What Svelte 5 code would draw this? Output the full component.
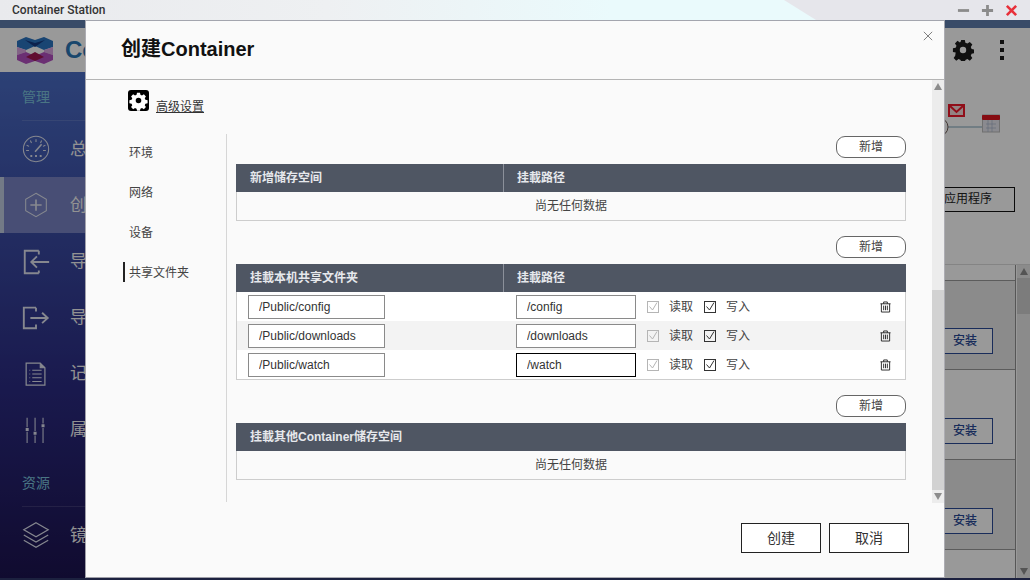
<script>
  const navItems = [
    { label: '总览', icon: 'gauge' },
    { label: '创建', icon: 'plus', active: true },
    { label: '导入', icon: 'import' },
    { label: '导出', icon: 'export' },
    { label: '记录', icon: 'doc' },
    { label: '属性', icon: 'sliders' },
  ];
  const tabs = ['环境', '网络', '设备', '共享文件夹'];
  const shares = [
    { host: '/Public/config', path: '/config' },
    { host: '/Public/downloads', path: '/downloads' },
    { host: '/Public/watch', path: '/watch', focus: true },
  ];
</script>

{#snippet navIcon(name)}
  <svg class="nav-icon" viewBox="0 0 32 32" fill="none" stroke="currentColor" stroke-width="1.1">
    {#if name === 'gauge'}
      <circle cx="16" cy="16" r="13.5" />
      <path d="M15 19l7-8" stroke-width="1.6" />
      <path d="M16 5.500v3M10 7l1.200 2.600M22 7l-1.200 2.600M6 12l2.600 1.200M26 12l-2.600 1.200M5.500 17.500h3M23.500 17.500h3" />
      <path d="M10 23.500h2M15 23.500h2M20 23.500h2" stroke-width="2" />
    {:else if name === 'plus'}
      <path d="M16 3.500l11 6.300v12.400l-11 6.300-11-6.300V9.800z" />
      <path d="M16 10v12M10 16h12" stroke-width="1.800" />
    {:else if name === 'import'}
      <path d="M19 5H4v24h15M19 5v4M19 29v-3" stroke-width="2" />
      <path d="M30 17H11M17 11l-6 6 6 6" stroke-width="2" />
    {:else if name === 'export'}
      <path d="M16 6H3v22h13v-4M16 6v4" stroke-width="2" />
      <path d="M10 17h18M22.500 11.500l6 5.500-6 5.500" stroke-width="2" />
    {:else if name === 'doc'}
      <path d="M5.500 5.500h15l5 5v18.500h-20z" stroke-width="1.300" />
      <path d="M20.500 5.500v5h5" fill="currentColor" />
      <path d="M9 13h.8M9 17h.8M9 21h.8M9 25h.8M12 13h10M12 17h10M12 21h10M12 25h10" />
    {:else if name === 'sliders'}
      <path d="M6.500 4v10M6.500 19v12M15 4v14M15 23v8M23.500 4v6M23.500 15v16" />
      <path d="M5 15h3.200v3.200H5zM13.400 19h3.200v3.200h-3.200zM21.900 11h3.200v3.200h-3.200z" fill="currentColor" stroke="none" />
    {/if}
  </svg>
{/snippet}

{#snippet check(muted)}
  <svg class="check" class:muted viewBox="0 0 12 12" fill="none" stroke="currentColor">
    <rect x=".5" y=".5" width="11" height="11" />
    <path d="M2.500 5.500l3 3.500 4.500-7.500" />
  </svg>
{/snippet}

{#snippet addButton()}
  <div class="add-row"><button type="button" class="add">新增</button></div>
{/snippet}

<div class="window">
  <header class="titlebar">
    <div class="swoosh"></div>
    <span class="app-name">Container Station</span>
    <div class="win-controls">
      <svg viewBox="0 0 14 14" class="win"><path d="M1 7h12" stroke="#8b8b8b" stroke-width="3" /></svg>
      <svg viewBox="0 0 14 14" class="win"><path d="M1 7h12M7 1v12" stroke="#8b8b8b" stroke-width="3" /></svg>
      <svg viewBox="0 0 14 14" class="win"><path d="M2 2l10 10M12 2L2 12" stroke="#e8303a" stroke-width="2.800" /></svg>
    </div>
  </header>

  <div class="app">
    <div class="strip"></div>
    <div class="appbar">
      <div class="brand">
        <svg viewBox="0 0 36 27" class="logo">
          <polygon points="0,4 9,0 18,3 27,0 36,4 36,10 27,13 18,9 9,13 0,10" fill="#2a73c0" />
          <polygon points="8,3 18,6 28,3 18,10" fill="#163a80" />
          <polygon points="0,10 9,13 9,15 0,18" fill="#d9a6e0" />
          <polygon points="36,10 27,13 27,15 36,18" fill="#d9a6e0" />
          <polygon points="0,18 9,15 18,19 27,15 36,18 36,23 27,27 18,24 9,27 0,23" fill="#b24fc0" />
          <polygon points="9,20 18,15 27,20 18,24" fill="#a01750" />
        </svg>
        <span class="brand-name">Co</span>
      </div>
      <div class="bar-actions">
        <svg viewBox="0 0 24 24" class="gear"><path d="M12 8.500a3.500 3.500 0 100 7 3.500 3.500 0 000-7zM10 1h4l.6 3 2.200.9 2.600-1.700 2.800 2.800-1.700 2.600.9 2.200 3 .6v4l-3 .6-.9 2.200 1.700 2.600-2.800 2.800-2.600-1.700-2.200.9-.6 3h-4l-.6-3-2.200-.9-2.600 1.700-2.800-2.800 1.700-2.600L4 14.800l-3-.6v-4l3-.6.900-2.200L3.200 4.800 6 2l2.600 1.700 .8-.7z" fill="#1c1c1c" fill-rule="evenodd" /></svg>
        <div class="dots"><i></i><i></i><i></i></div>
      </div>
    </div>

    <div class="under">
      <aside class="sidebar">
        <div class="side-title">管理</div>
        {#each navItems as item}
          <div class="nav-item" class:active={item.active}>
            {@render navIcon(item.icon)}
            <span>{item.label}</span>
          </div>
        {/each}
        <div class="side-title">资源</div>
        <div class="nav-item">
          <svg class="nav-icon" viewBox="0 0 32 32" fill="none" stroke="currentColor" stroke-width="1.300">
            <path d="M16 3l13 7.500-13 7.500-13-7.500z" />
            <path d="M3 16l13 7.500L29 16M3 21.500L16 29l13-7.500" />
          </svg>
          <span>镜像</span>
        </div>
      </aside>

      <main class="content">
        <div class="flow">
          <svg viewBox="0 0 66 36" class="flow-art" fill="none">
            <path d="M8 27h34" stroke="#7aa2b8" />
            <circle cx="-1" cy="27" r="9" stroke="#6d5a55" />
            <path d="M9 5h15v11H9z" fill="#f7dada" stroke="#f0182a" stroke-width="2" />
            <path d="M10 6l6.500 6L23 6" stroke="#f0182a" stroke-width="2" />
            <rect x="42.500" y="15" width="17" height="17" fill="#e6e6ee" stroke="#bbb" />
            <rect x="42" y="15" width="18" height="5" rx="1" fill="#e0141f" />
            <path d="M46 24h10M46 28h10M48 20v12M52 20v12" stroke="#a8b4cc" stroke-width=".7" />
          </svg>
        </div>
        <div class="toolbar"><div class="apps-btn">应用程序</div></div>
        <div class="apps">
          <div class="app-list">
            {#each [0, 1, 2, 3] as row}
              <div class="app-row" class:alt={row % 2 === 1}>
                {#if row < 3}<div class="install">安装</div>{/if}
              </div>
            {/each}
          </div>
          <div class="page-scroll">
            <i class="up"></i>
            <div class="page-thumb"></div>
            <i class="down"></i>
          </div>
        </div>
      </main>
    </div>
    <div class="bottom-line"></div>

    <div class="backdrop"></div>

    <div class="modal" role="dialog" aria-modal="true">
      <div class="modal-head">
        <h2>创建Container</h2>
        <svg class="close" viewBox="0 0 12 12"><path d="M1 1l10 10M11 1L1 11" stroke="#666" /></svg>
      </div>
      <div class="modal-body">
        <div class="scroll-area">
          <div class="advanced">
            <span class="adv-icon">
              <svg viewBox="0 0 24 24"><path d="M12 8.800a3.200 3.200 0 100 6.400 3.200 3.200 0 000-6.400zM10.300 3h3.400l.5 2.500 1.800.8 2.100-1.400 2.400 2.400-1.400 2.100.8 1.800 2.500.5v3.400l-2.500.5-.8 1.800 1.400 2.100-2.400 2.400-2.100-1.400-1.800.8-.5 2.500h-3.400l-.5-2.500-1.800-.8-2.100 1.400-2.400-2.400 1.400-2.100-.8-1.800-2.500-.5v-3.400l2.500-.5.800-1.800-1.400-2.100 2.400-2.400 2.100 1.400 1.800-.8z" fill="#fff" fill-rule="evenodd" /></svg>
            </span>
            <span class="adv-label">高级设置</span>
          </div>
          <div class="columns">
            <nav class="tabs">
              {#each tabs as tab, i}
                <div class="tab" class:current={i === tabs.length - 1}>{tab}</div>
              {/each}
            </nav>
            <section class="panel">
              {@render addButton()}
              <div class="table">
                <div class="thead"><span class="col-a">新增储存空间</span><span class="col-b">挂載路径</span></div>
                <div class="empty">尚无任何数据</div>
              </div>

              {@render addButton()}
              <div class="table">
                <div class="thead"><span class="col-a">挂載本机共享文件夹</span><span class="col-b">挂載路径</span></div>
                {#each shares as share}
                  <div class="share-row">
                    <input class="host" value={share.host} />
                    <input class="path" class:focus={share.focus} value={share.path} />
                    {@render check(true)}
                    <span class="perm">读取</span>
                    {@render check(false)}
                    <span class="perm">写入</span>
                    <svg class="trash" viewBox="0 0 12 12" fill="none" stroke="#222">
                      <path d="M.5 2.500h11M4 2.500V.5h4v2M1.500 2.500v9h9v-9M4 4.500v5M6 4.500v5M8 4.500v5" />
                    </svg>
                  </div>
                {/each}
              </div>

              {@render addButton()}
              <div class="table">
                <div class="thead"><span class="col-a solo">挂載其他Container储存空间</span></div>
                <div class="empty">尚无任何数据</div>
              </div>
            </section>
          </div>
        </div>
        <div class="scrollbar">
          <i class="up"></i>
          <div class="track"><div class="thumb"></div></div>
          <i class="down"></i>
        </div>
      </div>
      <div class="modal-foot">
        <button type="button" class="action">创建</button>
        <button type="button" class="action">取消</button>
      </div>
    </div>
  </div>
</div>

<style>
  :global(body) {
    margin: 0;
    background: #1a1238;
  }

  .window {
    width: 1030px;
    height: 580px;
    display: flex;
    flex-direction: column;
    overflow: hidden;
    font-family: "Liberation Sans", "Noto Sans CJK SC", sans-serif;
  }

  .titlebar {
    position: relative;
    height: 20px;
    flex: none;
    display: flex;
    align-items: center;
    justify-content: space-between;
    padding: 0 12px;
    background: #e6e6eb;
    overflow: hidden;
  }

  .app-name {
    position: relative;
    font: 500 12px Roboto, sans-serif;
    color: #333;
  }

  .swoosh {
    position: absolute;
    left: 0;
    top: 0;
    width: 816px;
    height: 20px;
    background: linear-gradient(90deg, #e9eaed, #eef0f2 40%, #eafafc 75%);
    clip-path: polygon(0 0, 784px 0, 816px 20px, 0 20px);
  }

  .win-controls {
    position: relative;
    display: flex;
    gap: 11px;
  }

  .win {
    width: 13px;
    height: 13px;
  }

  .app {
    position: relative;
    flex: 1;
    min-height: 0;
    display: flex;
    flex-direction: column;
  }

  .strip {
    height: 8px;
    flex: none;
    background: #5f7dad;
  }

  .appbar {
    height: 44px;
    flex: none;
    display: flex;
    align-items: center;
    justify-content: space-between;
    background: #fff;
    padding: 0 17px;
  }

  .brand {
    display: flex;
    align-items: center;
    gap: 12px;
  }

  .logo {
    width: 36px;
    height: 27px;
  }

  .brand-name {
    white-space: nowrap;
    font: 700 24px "Liberation Sans", sans-serif;
    color: #2a76b5;
  }

  .bar-actions {
    display: flex;
    align-items: center;
    gap: 26px;
  }

  .gear {
    width: 22px;
    height: 22px;
  }

  .dots {
    display: flex;
    flex-direction: column;
    gap: 4px;
    margin-right: 9px;
  }

  .dots i {
    width: 4px;
    height: 4px;
    background: #1c1c1c;
  }

  .under {
    flex: 1;
    min-height: 0;
    display: flex;
  }

  .bottom-line {
    height: 2px;
    flex: none;
    background: #30386a;
  }

  .sidebar {
    width: 240px;
    flex: none;
    background: linear-gradient(#4a6cc4, #2b2b82 62%, #1c1350);
    color: #f4f4f4;
  }

  .side-title {
    height: 49px;
    margin-left: 22px;
    padding-top: 14px;
    box-sizing: border-box;
    border-bottom: 1px solid rgba(255, 255, 255, .12);
    font-size: 14px;
    color: #7cc4dc;
  }

  .nav-item + .side-title {
    height: 50px;
    padding-top: 15px;
  }

  .nav-item {
    height: 56px;
    display: flex;
    align-items: center;
    gap: 19px;
    padding-left: 21px;
    box-sizing: border-box;
    font-size: 17px;
  }

  .nav-item span {
    margin-top: -3px;
  }

  .nav-item.active {
    background: #7883c3;
    border-left: 4px solid #c0cbe0;
    padding-left: 17px;
  }

  .nav-icon {
    width: 30px;
    height: 30px;
    flex: none;
    color: #dfe2ee;
  }

  .content {
    flex: 1;
    min-width: 0;
    display: flex;
    flex-direction: column;
    background: #fff;
  }

  .flow {
    height: 36px;
    padding: 28px 0 0 700px;
  }

  .flow-art {
    display: block;
    width: 66px;
    height: 36px;
  }

  .toolbar {
    display: flex;
    justify-content: flex-end;
    padding: 51px 15px 0 0;
  }

  .apps-btn {
    width: 92px;
    height: 25px;
    box-sizing: border-box;
    border: 1px solid #111;
    text-align: right;
    padding-right: 22px;
    font-size: 12px;
    line-height: 23px;
    color: #222;
  }

  .apps {
    flex: 1;
    min-height: 0;
    display: flex;
    margin-top: 52px;
    border-top: 1px solid #dcdcdc;
  }

  .app-list {
    flex: 1;
    min-width: 0;
    padding-top: 15px;
    border-right: 1px solid #8f8f8f;
    overflow: hidden;
  }

  .app-row {
    height: 90px;
    display: flex;
    align-items: flex-end;
    justify-content: flex-end;
    padding: 0 22px 15px 0;
    border-bottom: 1px solid #9a9a9a;
    box-sizing: border-box;
    background: #e8e8e8;
  }

  .app-row:first-child {
    border-top: 1px solid #9a9a9a;
  }

  .app-row.alt {
    background: #fff;
  }

  .install {
    width: 56px;
    height: 26px;
    box-sizing: border-box;
    border: 1px solid #2b4a96;
    text-align: center;
    font-size: 12px;
    font-weight: 500;
    line-height: 25px;
    color: #2b4a96;
    background: #fff;
  }

  .page-scroll {
    width: 13px;
    margin-left: 1px;
    display: flex;
    flex-direction: column;
    align-items: center;
    background: #e8e8e8;
    padding-top: 3px;
  }

  .page-thumb {
    width: 100%;
    height: 36px;
    margin-top: 3px;
    background: #cfcfcf;
  }

  .page-scroll .down {
    margin-top: auto;
    margin-bottom: 3px;
  }

  .up,
  .down {
    display: block;
    width: 0;
    height: 0;
    border-left: 4.500px solid transparent;
    border-right: 4.500px solid transparent;
  }

  .up {
    border-bottom: 7px solid #8c8c8c;
  }

  .down {
    border-top: 7px solid #8c8c8c;
  }

  .backdrop {
    position: absolute;
    inset: 0;
    background: rgba(0, 0, 0, .4);
  }

  .modal {
    position: absolute;
    left: 86px;
    top: 1px;
    width: 858px;
    height: 556px;
    display: flex;
    flex-direction: column;
    background: #fafafa;
    box-shadow: 0 0 0 1px rgba(175, 175, 182, .9);
  }

  .modal-head {
    position: relative;
    height: 53px;
    flex: none;
    display: flex;
    align-items: center;
    padding: 0 0 5px 35px;
    border-bottom: 1px solid #b4b4b4;
  }

  h2 {
    margin: 0;
    font-size: 20px;
    font-weight: 700;
    color: #111;
  }

  .close {
    position: absolute;
    right: 11px;
    top: 10px;
    width: 10px;
    height: 10px;
  }

  .modal-body {
    height: 423px;
    flex: none;
    display: flex;
  }

  .scroll-area {
    flex: 1;
    min-width: 0;
  }

  .advanced {
    height: 54px;
    display: flex;
    align-items: flex-start;
    gap: 7px;
    padding: 10px 0 0 42px;
    box-sizing: border-box;
  }

  .adv-icon {
    width: 21px;
    height: 21px;
    background: #000;
    border-radius: 3px;
  }

  .adv-icon svg {
    display: block;
    width: 21px;
    height: 21px;
  }

  .adv-label {
    margin-top: 8px;
    font-size: 12px;
    line-height: 18px;
    color: #333;
    text-decoration: underline;
  }

  .columns {
    display: flex;
    height: 368px;
  }

  .tabs {
    width: 141px;
    flex: none;
    padding-left: 37px;
    box-sizing: border-box;
    border-right: 1px solid #d6d6d6;
    margin-right: 9px;
  }

  .tab {
    position: relative;
    top: -3px;
    height: 40px;
    display: flex;
    align-items: center;
    padding-left: 6px;
    box-sizing: border-box;
    font-size: 12px;
    color: #444;
  }

  .tab.current::before {
    content: "";
    position: absolute;
    left: 0;
    top: 11px;
    width: 2px;
    height: 20px;
    background: #222;
  }

  .panel {
    width: 670px;
    flex: none;
  }

  .add-row {
    display: flex;
    justify-content: flex-end;
    height: 22px;
    margin-top: 15px;
    margin-bottom: 6px;
  }

  .panel > .add-row:first-child {
    margin-top: 2px;
  }

  .add {
    width: 70px;
    height: 22px;
    padding: 0 0 4px;
    border: 1px solid #666;
    border-radius: 9px;
    background: #fff;
    font: 12px "Noto Sans CJK SC", sans-serif;
    color: #444;
  }

  .table {
    border: 1px solid #cdcdcd;
    border-top: 0;
  }

  .thead {
    height: 28px;
    margin: 0 -1px;
    display: flex;
    align-items: center;
    background: #4f5663;
    font-size: 12px;
    font-weight: 700;
    color: #e6e8ec;
  }

  .col-a {
    width: 268px;
    flex: none;
    height: 100%;
    display: flex;
    align-items: center;
    padding: 0 0 4px 14px;
    box-sizing: border-box;
    border-right: 1px solid #8b909a;
  }

  .col-a.solo {
    width: auto;
    border-right: 0;
  }

  .col-b {
    padding: 0 0 4px 13px;
  }

  .empty {
    height: 28px;
    display: flex;
    align-items: center;
    justify-content: center;
    padding-bottom: 3px;
    box-sizing: border-box;
    font-size: 12px;
    color: #444;
  }

  .share-row {
    height: 29px;
    display: flex;
    align-items: center;
    padding-left: 11px;
    background: #fff;
  }

  .share-row:nth-child(3) {
    background: #f3f3f3;
  }

  input {
    height: 24px;
    padding: 0 10px;
    box-sizing: border-box;
    border: 1px solid #8a8a8a;
    border-radius: 0;
    background: #fff;
    font: 12px "Liberation Sans", sans-serif;
    color: #333;
    outline: 0;
  }

  .host {
    width: 137px;
  }

  .path {
    width: 120px;
    margin: 0 11px 0 131px;
  }

  .path.focus {
    border-color: #000;
  }

  .check {
    width: 12px;
    height: 12px;
    flex: none;
    margin-right: 10px;
    color: #333;
  }

  .check.muted {
    color: #b5b5b5;
  }

  .perm {
    width: 24px;
    margin: -2px 11px 0 0;
    font-size: 12px;
    color: #444;
  }

  .trash {
    width: 11px;
    height: 12px;
    margin-left: auto;
    margin-right: 14px;
  }

  .scrollbar {
    width: 12px;
    flex: none;
    display: flex;
    flex-direction: column;
    align-items: center;
    padding-top: 3px;
    box-sizing: border-box;
    background: #ececec;
  }

  .track {
    width: 100%;
    height: 403px;
    padding-top: 200px;
    box-sizing: border-box;
  }

  .thumb {
    height: 200px;
    background: #d2d2d2;
  }

  .modal-foot {
    flex: 1;
    display: flex;
    justify-content: flex-end;
    align-items: flex-start;
    gap: 8px;
    padding: 20px 35px 0 0;
  }

  .action {
    width: 80px;
    height: 30px;
    padding: 0 0 2px;
    border: 1px solid #222;
    border-radius: 0;
    background: #fff;
    font: 14px "Noto Sans CJK SC", sans-serif;
    color: #333;
  }
</style>
